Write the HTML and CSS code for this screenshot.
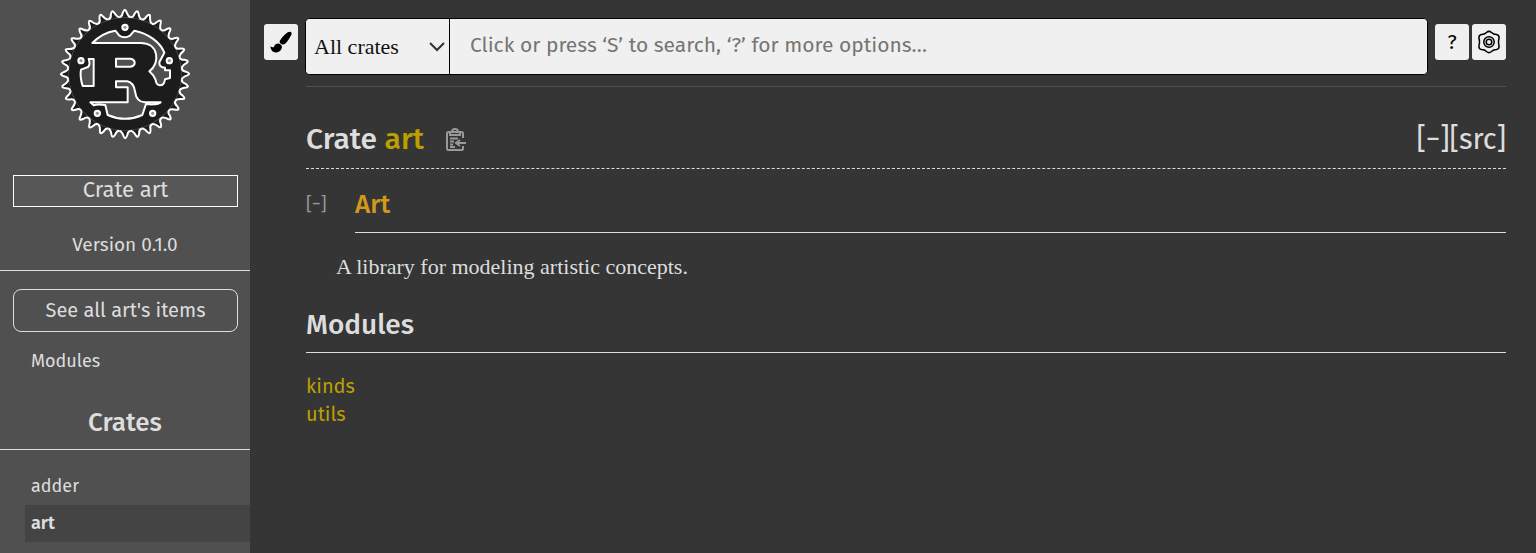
FILE: index.html
```
<!DOCTYPE html>
<html lang="en">

<head>
    <meta charset="utf-8">
    <meta name="viewport" content="width=device-width, initial-scale=1.0">
    <title>art - Rust</title>
    <link rel="stylesheet" href="styles.css">
</head>

<body>

    <nav class="sidebar">
        <a class="logo" href="#" aria-label="art">
            <svg viewBox="29 27 390 390">
                <defs>
                    <path id="tooth" d="M-17-170Q-8-172-7-183Q-1-199 4-187Q9-172 17-170" />
                    <g id="teeth2"><use href="#tooth" /><use href="#tooth" transform="rotate(11.25)" /></g>
                    <g id="teeth4"><use href="#teeth2" /><use href="#teeth2" transform="rotate(22.5)" /></g>
                    <g id="teeth8"><use href="#teeth4" /><use href="#teeth4" transform="rotate(45)" /></g>
                    <g id="teeth16"><use href="#teeth8" /><use href="#teeth8" transform="rotate(90)" /></g>
                </defs>
                <g class="gear" transform="translate(224 222)">
                    <use href="#teeth16" />
                    <use href="#teeth16" transform="rotate(180)" />
                    <circle class="disc" r="168" />
                </g>
                <g class="holes">
                    <path d="M126 129C146 108 170 96 195 92L207 107Q223 117 239 107L252 92C292 99 330 127 342 158L327 187Q326 202 344 203V211H359V234L344 238Q341 257 328 256Q317 254 316 240Q311 226 297 214C330 190 326 129 272 129Z" />
                    <path d="M115 177H130V258H97Q88 230 92 209L113 201Q121 193 115 177Z" />
                    <path d="M197 176H240Q253 178 253 188Q253 198 240 200H197Z" />
                    <path d="M120 307H232V262H197V244H231Q250 248 254 274Q258 306 284 307H331Q318 316 287 312L276 345Q224 368 172 345L165 315Q140 311 130 316Z" />
                </g>
                <g class="rivets">
                    <circle cx="224" cy="82" r="8" />
                    <circle cx="92" cy="182" r="8" />
                    <circle cx="357" cy="182" r="8" />
                    <circle cx="141" cy="340" r="8" />
                    <circle cx="307" cy="340" r="8" />
                </g>
            </svg>
        </a>
        <p class="location">Crate art</p>
        <p class="version">Version 0.1.0</p>
        <a class="all-items" href="#">See all art's items</a>
        <ul class="block">
            <li><a href="#modules">Modules</a></li>
        </ul>
        <h3>Crates</h3>
        <ul class="block crates">
            <li><a href="#">adder</a></li>
            <li><a class="current" href="#">art</a></li>
        </ul>
    </nav>

    <main>
        <form class="toolbar">
            <button class="tool" type="button" aria-label="Pick another theme">
                <svg width="22" height="22" viewBox="0 0 22 22">
                    <path d="M20.5.7Q22 1.400 21.500 3.400Q18 10 15.400 12.600Q13.500 14 11.500 13.300Q9.300 12 9.600 9.900Q11.500 6.500 15.500 3Q18 .5 20.500.7Z" />
                    <path d="M8.500 12.500Q11.500 13 12 16Q11.500 20 7.500 21.200Q1.500 22.500.2 15.200Q2.500 17 4 16Q4.500 12.500 8.500 12.500Z" />
                </svg>
            </button>
            <div class="search">
                <div class="picker">
                    <select aria-label="Crate to search">
                        <option>All crates</option>
                        <option>adder</option>
                        <option>art</option>
                    </select>
                    <svg width="16" height="10" viewBox="0 0 16 10">
                        <path d="M1 1l7 7 7-7" />
                    </svg>
                </div>
                <input type="search" aria-label="Search" placeholder="Click or press ‘S’ to search, ‘?’ for more options…">
            </div>
            <div class="buttons">
                <button class="tool" type="button" aria-label="Help">?</button>
                <button class="tool" type="button" aria-label="Change settings">
                    <svg class="settings" width="22" height="24" viewBox="0 0 22 24">
                        <path d="M8.500 2.500Q11 .2 13.500 2.500Q15.500 4.500 18.500 4.500Q21.500 5 21 8.500Q20 12 21 15.500Q21.500 19 18.500 19.500Q15.500 19.500 13.500 21.500Q11 23.800 8.500 21.500Q6.500 19.500 3.500 19.500Q.5 19 1 15.500Q2 12 1 8.500Q.5 5 3.500 4.500Q6.500 4.500 8.500 2.500Z" />
                        <circle cx="11" cy="12" r="5.2" />
                        <circle cx="11" cy="12" r="2.800" />
                    </svg>
                </button>
            </div>
        </form>

        <section class="content">
            <div class="title">
                <h1>Crate <a href="#">art</a></h1>
                <button class="copy" type="button" aria-label="Copy item path">
                    <svg width="22" height="24" viewBox="0 0 22 24">
                        <path d="M18 10V5.500Q18 4 16.500 4H3.500Q2 4 2 5.500V20.500Q2 22 3.500 22H16.500Q18 22 18 20.500V18M5 7V4h2q0-3 3-3t3 3h2v3zM5 10.500h8M5 13.500h4M5 16.500h3M5 19h5M21 15H11m4-3l-4 3 4 3" />
                    </svg>
                </button>
                <span class="out-of-band"><a href="#">[−]</a><a href="#">[src]</a></span>
            </div>

            <div class="doc-head">
                <button class="toggle" type="button">[−]</button>
                <h2><a href="#art">Art</a></h2>
            </div>
            <p class="docblock">A library for modeling artistic concepts.</p>

            <h2 id="modules">Modules</h2>
            <ul class="items">
                <li><a href="#">kinds</a></li>
                <li><a href="#">utils</a></li>
            </ul>
        </section>
    </main>

</body>

</html>
```
FILE: styles.css
```
* {
    box-sizing: border-box;
}

body {
    margin: 0;
    min-height: 100vh;
    display: flex;
    background-color: #353535;
    color: #ddd;
    font-family: "Fira Sans", "Noto Sans", sans-serif;
    font-size: 20px;
}

h1, h2, h3, p, ul {
    margin: 0;
    padding: 0;
}

h1, h2, h3 {
    font-weight: 500;
}

ul {
    list-style: none;
}

a {
    color: inherit;
    text-decoration: none;
}

button {
    padding: 0;
    border: none;
    background: none;
    font-family: inherit;
    cursor: pointer;
}

svg {
    display: block;
}

/* sidebar */

.sidebar {
    width: 250px;
    flex-shrink: 0;
    padding-top: 9px;
    background-color: #505050;
}

.logo {
    display: block;
    width: 130px;
    margin: 0 auto 36px;
}

.gear {
    fill: #1c1c1c;
    stroke: #fff;
    stroke-width: 6;
}

.gear .disc {
    stroke: none;
}

.holes {
    fill: #505050;
    stroke: #fff;
    stroke-width: 6;
    stroke-linejoin: round;
}

.rivets {
    fill: #999;
    stroke: #fff;
    stroke-width: 6;
}

.location {
    margin: 0 12px 0 13px;
    padding-bottom: 2px;
    border: 1px solid #fff;
    background-color: #575757;
    font-size: 22px;
    line-height: 28px;
    text-align: center;
}

.version {
    padding: 22px 0 10px;
    border-bottom: 1px solid #ddd;
    margin-bottom: 18px;
    font-size: 19px;
    line-height: 31px;
    text-align: center;
}

.all-items {
    display: block;
    margin: 0 12px 11px 13px;
    border: 1px solid #ddd;
    border-radius: 8px;
    line-height: 41px;
    text-align: center;
}

.block {
    padding-left: 25px;
    font-size: 18px;
}

.block a {
    display: block;
    padding: 0 0 1px 6px;
    line-height: 36px;
}

.block .current {
    background-color: #444;
    font-weight: 600;
}

.sidebar h3 {
    margin: 25px 0 18px;
    padding-bottom: 8px;
    border-bottom: 1px solid #ddd;
    font-size: 26px;
    line-height: 36px;
    text-align: center;
}

/* search bar */

main {
    flex: 1;
    min-width: 0;
    padding: 18px 30px 30px 14px;
}

.toolbar {
    display: flex;
    gap: 7px;
}

.tool {
    display: flex;
    align-items: center;
    justify-content: center;
    width: 34px;
    height: 36px;
    margin-top: 6px;
    border-radius: 3px;
    background-color: #f0f0f0;
    color: #000;
    font-size: 20px;
}

.settings {
    fill: none;
    stroke: #000;
    stroke-width: 1.5;
}

.search {
    flex: 1;
    display: flex;
    height: 57px;
    border: 1px solid #000;
    border-radius: 5px;
    background-color: #f0f0f0;
    overflow: hidden;
}

.picker {
    display: grid;
    width: 144px;
    border-right: 1px solid #000;
}

.picker select,
.picker svg {
    grid-area: 1 / 1;
}

.picker select {
    appearance: none;
    padding: 0 8px;
    border: none;
    background-color: #f0f0f0;
    color: #111;
    font-family: "Source Serif Pro", "Liberation Serif", serif;
    font-size: 22px;
}

.picker svg {
    align-self: center;
    justify-self: end;
    margin-right: 4px;
    fill: none;
    stroke: #333;
    stroke-width: 2;
    pointer-events: none;
}

.search input {
    flex: 1;
    min-width: 0;
    padding: 0 20px 4px;
    border: none;
    background-color: #f0f0f0;
    font-family: inherit;
    font-size: 21px;
}

.search input::placeholder {
    color: #757575;
}

.buttons {
    display: flex;
    gap: 3px;
}

/* documentation */

.content {
    margin: 11px 0 0 42px;
    border-top: 1px solid #505050;
}

.title {
    display: flex;
    align-items: center;
    padding: 30px 0 6px;
    border-bottom: 1px dashed #ddd;
    line-height: 45px;
}

h1 {
    font-size: 30px;
}

h1 a,
.items a {
    color: #bda000;
}

.copy {
    margin-left: 21px;
}

.copy svg {
    fill: none;
    stroke: #999;
    stroke-width: 2;
}

.out-of-band {
    margin-left: auto;
    font-size: 29px;
}

.doc-head {
    display: flex;
    align-items: flex-start;
    padding-top: 15px;
}

.toggle {
    width: 49px;
    color: #999;
    font-size: 18px;
    line-height: 40px;
    text-align: left;
}

.content h2 {
    padding-bottom: 7px;
    border-bottom: 1px solid #ddd;
    font-size: 28px;
    line-height: 41px;
}

.content .doc-head h2 {
    flex: 1;
    font-size: 26px;
}

.doc-head h2 a {
    color: #d2991d;
}

.docblock {
    margin: 18px 0 22px 30px;
    font-family: "Source Serif Pro", "Liberation Serif", serif;
    font-size: 22px;
    line-height: 31px;
}

.items {
    margin-top: 19px;
    line-height: 28px;
}
```
